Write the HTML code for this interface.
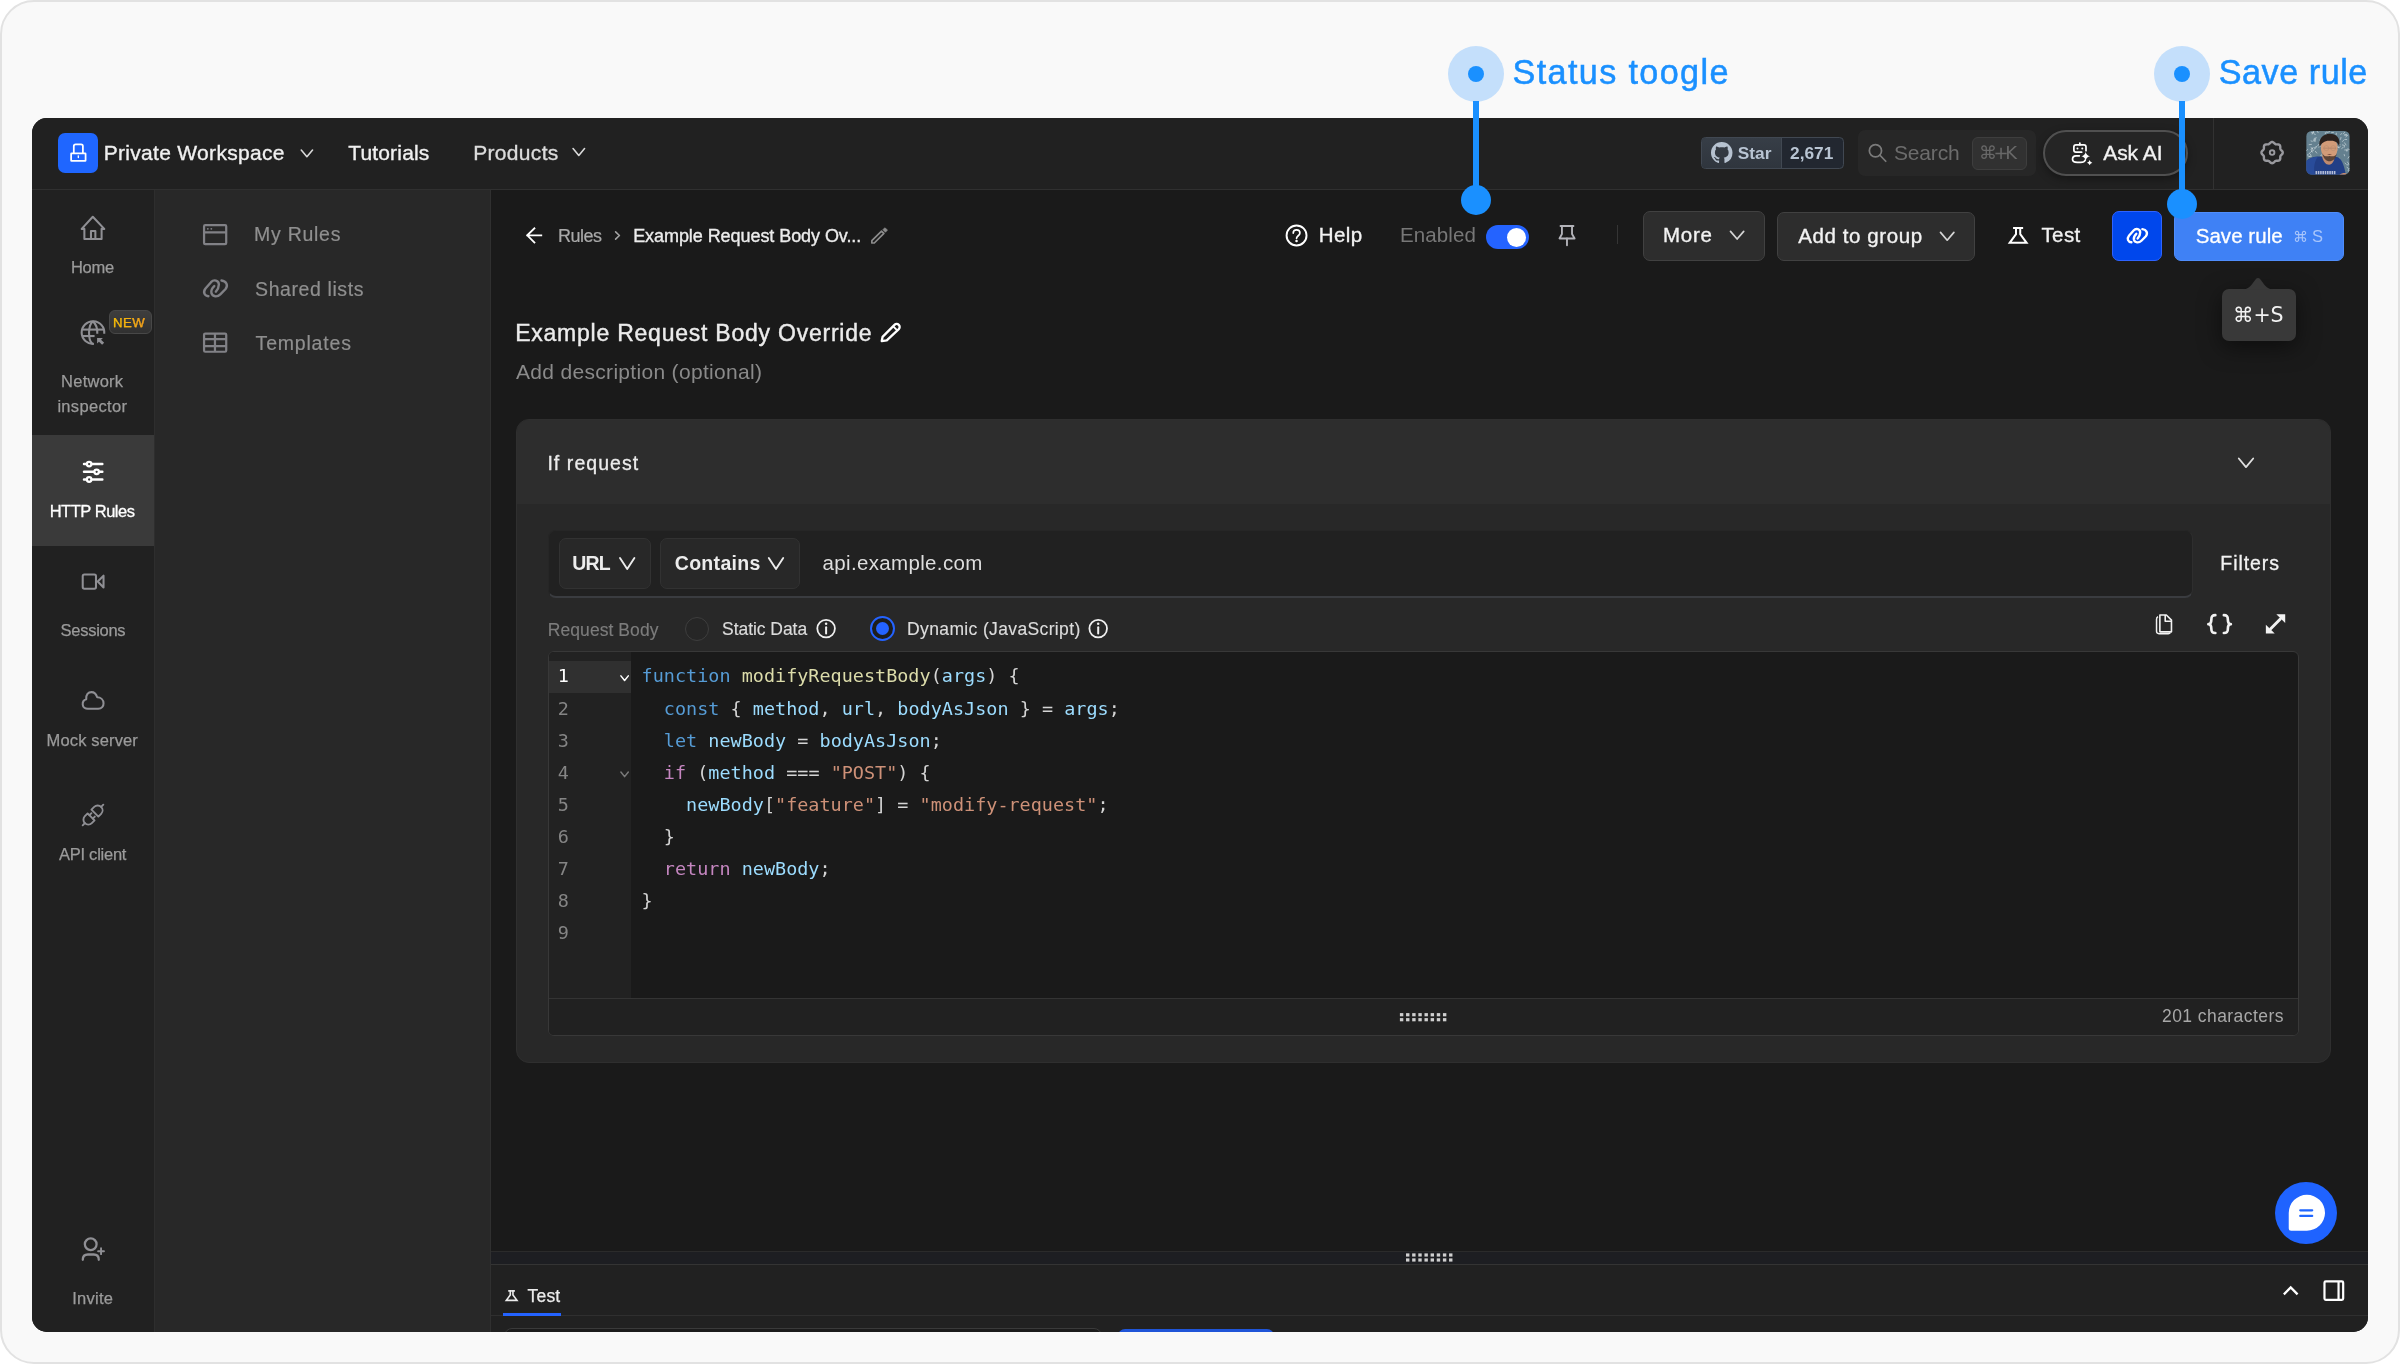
<!DOCTYPE html>
<html lang="en"><head><meta charset="utf-8"><title>Requestly – Example Request Body Override</title>
<style>
*{box-sizing:border-box;margin:0;padding:0}
html,body{width:2400px;height:1364px;overflow:hidden;background:#fff}
body{position:relative;font-family:"Liberation Sans","DejaVu Sans",sans-serif;}
.a{position:absolute}
.t{position:absolute;white-space:nowrap;line-height:1;font-kerning:normal}
#frame{position:absolute;left:0;top:0;width:2400px;height:1364px;border:2px solid #e2e2e2;border-radius:34px;background:#f9f9f9}
#win{position:absolute;left:0;top:0;width:2400px;height:1364px;clip-path:inset(118px 32px 32px 32px round 15px);background:#1a1a1a}
svg{position:absolute;overflow:visible}
.tl{will-change:transform}
.btn{position:absolute;background:#2d2d2d;border:1.5px solid #414141;border-radius:7px}
</style></head>
<body>

<div id="frame"></div>
<div id="win">
  <!-- header -->
  <div class="a" style="left:32px;top:118px;width:2336px;height:72px;background:#212121;border-bottom:1.5px solid #303030"></div>
  <!-- left rail -->
  <div class="a" style="left:32px;top:190px;width:123px;height:1142px;background:#212121;border-right:1.5px solid #2e2e2e"></div>
  <div class="a" style="left:32px;top:434.5px;width:122px;height:111px;background:#3a3a3a"></div>
  <!-- secondary sidebar -->
  <div class="a" style="left:155px;top:190px;width:336px;height:1142px;background:#282828;border-right:1.5px solid #303030"></div>

  <div class="a" style="left:109.2px;top:310px;width:42.6px;height:24.2px;border-radius:6px;background:linear-gradient(180deg,#3e3e3e,#313131);border:1.5px solid #484848"></div>
  <!-- logo -->
  <div class="a" style="left:58px;top:132.5px;width:40px;height:40px;border-radius:7px;background:#1f66ff"></div>
  <!--ICONS-->

  <!-- header right -->
  <div class="a" style="left:1701px;top:137px;width:143px;height:31.5px;border-radius:4.5px;background:#222730;border:1.5px solid #414852;overflow:hidden"><div class="a" style="left:-1.5px;top:-1.5px;width:81px;height:32px;background:linear-gradient(180deg,#373e47,#2f353d);border-right:1.5px solid #414852"></div></div>
  <div class="a" style="left:1858px;top:130px;width:178px;height:45.5px;border-radius:7px;background:#272727"></div>
  <div class="a" style="left:1972px;top:136.5px;width:54.5px;height:33px;border-radius:6px;background:#313131;border:1.5px solid #3e3e3e"></div>
  <div class="a" style="left:2042.5px;top:130px;width:145px;height:46px;border-radius:23px;background:#252525;border:2px solid #505050;box-shadow:0 3px 8px rgba(0,0,0,.35)"></div>
  <div class="a" style="left:2212.5px;top:118px;width:1.5px;height:71px;background:#323232"></div>

  <!-- toolbar -->
  <div class="a" style="left:1485.5px;top:224.5px;width:43.5px;height:24.5px;border-radius:13px;background:#2463ff"></div>
  <div class="a" style="left:1507px;top:227.5px;width:19px;height:19px;border-radius:10px;background:#fff"></div>
  <div class="a" style="left:1616.5px;top:225px;width:1.5px;height:19px;background:#353535"></div>
  <div class="btn" style="left:1642.5px;top:211px;width:122px;height:49.5px"></div>
  <div class="btn" style="left:1777px;top:211.5px;width:197.5px;height:49.5px"></div>
  <div class="a" style="left:2112px;top:211px;width:50px;height:49.5px;border-radius:7px;background:#0047ec;border:1.5px solid #2e63ff"></div>
  <div class="a" style="left:2174px;top:211.5px;width:169.5px;height:49.5px;border-radius:7px;background:#3f81f5;border:1.5px solid #4f8dfb"></div>
  <!-- tooltip -->
  <div class="a" style="left:2221.5px;top:289px;width:74px;height:52px;border-radius:7px;background:#393939;box-shadow:0 6px 22px rgba(0,0,0,.5)"></div>
  <svg style="left:2240px;top:276px" width="36" height="14" viewBox="0 0 36 14"><path d="M3 13.5 C9 13.5 12 8 15.5 3.5 Q18 .6 20.5 3.5 C24 8 27 13.5 33 13.5 Z" fill="#393939"/></svg>

  <!-- card -->
  <div class="a" style="left:515.5px;top:419px;width:1815.5px;height:644px;border-radius:13px;background:#282828;border:1.5px solid #2f2f2f;overflow:hidden"><div class="a" style="left:0;top:0;width:100%;height:84px;background:#2d2d2d"></div></div>
  <!-- source row -->
  <div class="a" style="left:548px;top:529.5px;width:1644.5px;height:68px;border-radius:8px;background:#212121;border:1.5px solid #262626;border-bottom:2.5px solid #3a3c40;border-right-color:#2e2e2e"></div>
  <div class="a" style="left:559px;top:538px;width:91.5px;height:50.5px;border-radius:7px;background:#282828;border:1.5px solid #323232"></div>
  <div class="a" style="left:660px;top:538px;width:140px;height:50.5px;border-radius:7px;background:#282828;border:1.5px solid #323232"></div>
  <!-- radios -->
  <div class="a" style="left:684.5px;top:616.5px;width:24px;height:24px;border-radius:12px;background:#262626;border:1.5px solid #3e3e3e"></div>
  <div class="a" style="left:870px;top:616px;width:25px;height:25px;border-radius:13px;background:#1d1d1d;border:2px solid #2463ff"></div>
  <div class="a" style="left:875.8px;top:621.8px;width:13.4px;height:13.4px;border-radius:7px;background:#2463ff"></div>
  <!-- editor -->
  <div class="a" style="left:548px;top:651px;width:1750.5px;height:385px;border-radius:6px;background:#1a1a1a;border:1.5px solid #383838;overflow:hidden">
    <div class="a" style="left:0;top:0;width:82px;height:346px;background:#222222"></div>
    <div class="a" style="left:0;top:9px;width:82px;height:32px;background:#303030"></div>
    <div class="a" style="left:0;top:346px;width:100%;height:40px;background:#212121;border-top:1.5px solid #343434"></div>
  </div>
  <!-- bottom panel -->
  <div class="a" style="left:491px;top:1250.5px;width:1877px;height:14px;background:#1d1e22;border-top:1.5px solid #2b2b2b;border-bottom:1.5px solid #343434"></div>
  <div class="a" style="left:491px;top:1264.5px;width:1877px;height:68px;background:#212121"></div>
  <div class="a" style="left:491px;top:1314.5px;width:1877px;height:1.5px;background:#2f2f2f"></div>
  <div class="a" style="left:503px;top:1312.5px;width:57.5px;height:3.5px;background:#2463ff"></div>
  <div class="a" style="left:503.5px;top:1328px;width:598px;height:20px;border-radius:8px;border:1.5px solid #3a3a3a;background:#1c1c1c"></div>
  <div class="a" style="left:1118px;top:1329px;width:156px;height:20px;border-radius:7px;background:#1f55d8"></div>
  <!-- chat fab -->
  <div class="a" style="left:2275px;top:1182px;width:62px;height:62px;border-radius:31px;background:#1f63ff"></div>
  <svg style="left:50px;top:125px" width="280" height="55" viewBox="0 0 2400 471" ><g fill="none" stroke="#fff" stroke-width="15" stroke-linejoin="round"><rect x="181" y="243" width="124" height="65" rx="4"/><path d="M204 246 V182 Q204 166 220 166 H266 Q282 166 282 182 V243"/><path d="M243 264 V278" stroke-linecap="round" stroke-width="12"/></g></svg>
<svg style="left:0;top:0" width="2400" height="1364"><path d="M301.25 150.10 L306.90 156.70 L312.55 150.10" fill="none" stroke="#d9d9d9" stroke-width="1.6" stroke-linecap="round" stroke-linejoin="round"/></svg>
<svg style="left:0;top:0" width="2400" height="1364"><path d="M573.05 148.60 L578.80 155.40 L584.55 148.60" fill="none" stroke="#d9d9d9" stroke-width="1.6" stroke-linecap="round" stroke-linejoin="round"/></svg>
<svg style="left:60px;top:205px" width="70" height="50" viewBox="0 0 1910 1364" ><g fill="none" stroke="#8f8f94" stroke-width="56" stroke-linejoin="round" stroke-linecap="round"><path d="M592 652 L895 322 L1208 652 H1135 V928 H665 V652 Z"/><path d="M845 925 V710 H965 V925"/></g></svg>
<svg style="left:60px;top:305px" width="100" height="50" viewBox="0 0 2400 1200" ><g fill="none" stroke="#8f8f94" stroke-width="50"><path d="M1062 690 A272 272 0 1 0 815 932"/><path d="M790 392 C672 480 665 830 775 932"/><path d="M790 392 C870 460 900 580 895 690"/><path d="M545 590 H1040"/><path d="M545 745 H830"/></g><path d="M890 790 H1030 L985 835 L1060 905 L1010 955 L935 880 L890 925 Z" fill="#8f8f94"/></svg>
<svg style="left:60px;top:450px" width="70" height="50" viewBox="0 0 1910 1364" ><g stroke="#fff" stroke-width="68" stroke-linecap="round" fill="none"><path d="M655 385 H1155 M655 595 H1155 M655 805 H1155"/></g><g fill="#3a3a3a" stroke="#fff" stroke-width="62"><circle cx="795" cy="385" r="62"/><circle cx="1000" cy="595" r="62"/><circle cx="795" cy="805" r="62"/></g></svg>
<svg style="left:60px;top:560px" width="70" height="50" viewBox="0 0 1910 1364" ><g fill="none" stroke="#8f8f94" stroke-width="56" stroke-linejoin="round"><rect x="620" y="395" width="362" height="388" rx="45"/><path d="M1030 588 L1188 428 V752 Z"/></g></svg>
<svg style="left:60px;top:680px" width="70" height="50" viewBox="0 0 1910 1364" ><path d="M760 785 H1040 C1140 785 1190 715 1188 635 C1185 540 1110 470 1015 470 C985 380 925 330 860 330 C770 330 705 400 715 525 C650 545 615 600 620 670 C625 740 690 785 760 785 Z" fill="none" stroke="#8f8f94" stroke-width="56" stroke-linejoin="round"/></svg>
<svg style="left:0;top:0" width="2400" height="1364"><g transform="translate(93 815) rotate(-45)" fill="none" stroke="#8f8f94" stroke-width="1.9" stroke-linecap="round" stroke-linejoin="round"><path d="M2.7 -4.9 V4.9 H6.6 A4.9 4.9 0 0 0 6.6 -4.9 Z"/><path d="M11.5 0 H14.6"/><path d="M-2.7 -4.9 V4.9 H-6.6 A4.9 4.9 0 0 1 -6.6 -4.9 Z"/><path d="M-11.5 0 H-14.6"/><path d="M-2.7 -2.4 H0.2 M-2.7 2.4 H0.2"/></g></svg>
<svg style="left:60px;top:1225px" width="70" height="50" viewBox="0 0 1910 1364" ><g fill="none" stroke="#8f8f94" stroke-width="62" stroke-linecap="round"><circle cx="838" cy="525" r="160"/><path d="M622 950 C622 850 680 805 760 805 H920 C1000 805 1058 850 1058 950"/><path d="M1040 715 H1200 M1120 635 V795" stroke-width="52"/></g></svg>
<svg style="left:190px;top:210px" width="60" height="160" viewBox="0 0 512 1364" ><g fill="none" stroke="#818186" stroke-width="19" stroke-linejoin="round"><rect x="120" y="128" width="189" height="163" rx="10"/><path d="M120 190 H309"/><rect x="120" y="1054" width="189" height="155" rx="10"/><path d="M120 1102 H309 M120 1160 H309 M213 1054 V1209"/></g><circle cx="152" cy="160" r="8" fill="#818186"/><circle cx="182" cy="160" r="8" fill="#818186"/></svg>
<svg style="left:0;top:0" width="2400" height="1364"><g transform="translate(176.99 251.82) scale(0.05234)"><path d="M600 848 C525 842 490 770 545 700 L650 580 C705 520 800 545 800 625 C800 685 770 730 742 762 M850 548 C940 558 985 635 928 712 L828 812 C770 870 680 862 658 790 C645 735 672 692 712 655" fill="none" stroke="#818186" stroke-width="45.9" stroke-linecap="round"/></g></svg>
<svg style="left:2105px;top:205px" width="65" height="60" viewBox="0 0 1478 1364" ><path d="M600 848 C525 842 490 770 545 700 L650 580 C705 520 800 545 800 625 C800 685 770 730 742 762 M850 548 C940 558 985 635 928 712 L828 812 C770 870 680 862 658 790 C645 735 672 692 712 655" fill="none" stroke="#fff" stroke-width="54" stroke-linecap="round"/></svg>
<svg style="left:515px;top:215px" width="120" height="40" viewBox="0 0 2400 800" ><path d="M525 407 H245 M388 268 L245 407 L388 548" fill="none" stroke="#fff" stroke-width="37" stroke-linecap="square" stroke-linejoin="miter"/><path d="M2012 338 L2088 410 L2012 482" fill="none" stroke="#a3a3a3" stroke-width="32" stroke-linecap="round" stroke-linejoin="round"/></svg>
<svg style="left:860px;top:215px" width="50" height="40" viewBox="0 0 1705 1364" ><path d="M405 955 V872 L735 548 L815 628 L488 955 Z" fill="none" stroke="#8b8b8b" stroke-width="58" stroke-linejoin="round"/><path d="M778 500 L838 440 Q850 428 862 440 L928 506 Q940 518 928 530 L868 590 Z" fill="#8b8b8b" stroke="#8b8b8b" stroke-width="20" stroke-linejoin="round"/></svg>
<svg style="left:870px;top:312px" width="50" height="40" viewBox="0 0 1705 1364" ><path d="M400 992 L428 850 L835 440 A100 100 0 0 1 982 585 L572 968 Z" fill="none" stroke="#fff" stroke-width="78" stroke-linejoin="round"/><path d="M800 498 L912 610" stroke="#fff" stroke-width="62"/></svg>
<svg style="left:1275px;top:215px" width="60" height="40" viewBox="0 0 2046 1364" ><g fill="none" stroke="#fff" stroke-width="66" stroke-linecap="round"><circle cx="735" cy="697" r="340"/><path d="M622 615 C622 545 675 510 735 510 C800 510 850 555 850 615 C850 700 735 715 735 795" stroke-width="58"/></g><circle cx="735" cy="888" r="44" fill="#fff"/></svg>
<svg style="left:1540px;top:215px" width="60" height="40" viewBox="0 0 2046 1364" ><g fill="none" stroke="#b3b3b9" stroke-width="64" stroke-linecap="round" stroke-linejoin="round"><path d="M700 375 H1140"/><path d="M748 375 V650 L665 800 H1180 L1092 650 V375"/><path d="M920 800 V1030"/></g></svg>
<svg style="left:0;top:0" width="2400" height="1364"><path d="M1730.50 231.40 L1737.10 239.00 L1743.70 231.40" fill="none" stroke="#d4d4d4" stroke-width="1.7" stroke-linecap="round" stroke-linejoin="round"/></svg>
<svg style="left:0;top:0" width="2400" height="1364"><path d="M1940.50 232.40 L1947.20 240.20 L1953.90 232.40" fill="none" stroke="#d4d4d4" stroke-width="1.7" stroke-linecap="round" stroke-linejoin="round"/></svg>
<svg style="left:1995px;top:215px" width="60" height="40" viewBox="0 0 2046 1364" ><g fill="none" stroke="#fff" stroke-width="68" stroke-linejoin="miter" stroke-linecap="square"><path d="M650 440 H925"/><path d="M717 440 V655 L500 950 H1078 L860 655 V440"/></g></svg>
<svg style="left:1710.6px;top:141.9px" width="21.5" height="21.5" viewBox="0 0 16 16" ><path d="M8 0C3.58 0 0 3.58 0 8c0 3.54 2.29 6.53 5.47 7.59.4.07.55-.17.55-.38 0-.19-.01-.82-.01-1.49-2.01.37-2.53-.49-2.69-.94-.09-.23-.48-.94-.82-1.13-.28-.15-.68-.52-.01-.53.63-.01 1.08.58 1.23.82.72 1.21 1.87.87 2.33.66.07-.52.28-.87.51-1.07-1.78-.2-3.64-.89-3.64-3.95 0-.87.31-1.59.82-2.15-.08-.2-.36-1.02.08-2.12 0 0 .67-.21 2.2.82.64-.18 1.32-.27 2-.27.68 0 1.36.09 2 .27 1.53-1.04 2.2-.82 2.2-.82.44 1.1.16 1.92.08 2.12.51.56.82 1.27.82 2.15 0 3.07-1.87 3.75-3.65 3.95.29.25.54.73.54 1.48 0 1.07-.01 1.93-.01 2.2 0 .21.15.46.55.38A8.013 8.013 0 0016 8c0-4.42-3.58-8-8-8z" fill="#b6c2d0"/></svg>
<svg style="left:1855px;top:125px" width="190" height="55" viewBox="0 0 2400 695" ><g fill="none" stroke="#7b7b7b" stroke-width="22" stroke-linecap="round"><circle cx="258" cy="325" r="77"/><path d="M315 382 L388 458"/></g></svg>
<svg style="left:2040px;top:125px" width="160" height="55" viewBox="0 0 2400 825" ><g fill="none" stroke="#fff" stroke-width="26" stroke-linecap="round" stroke-linejoin="round"><path d="M690 385 V330 Q690 298 658 298 H540 Q508 298 508 330 V375 Q508 408 540 408 H625"/><path d="M598 270 V295"/><path d="M590 462 H540 C500 462 488 490 488 515 C488 545 515 562 560 562 H610 C650 562 672 545 680 525"/></g><circle cx="562" cy="352" r="15" fill="#fff"/><circle cx="634" cy="352" r="15" fill="#fff"/><path d="M685 405 Q696 458 750 470 Q696 482 685 535 Q674 482 620 470 Q674 458 685 405 Z" fill="#fff"/><path d="M745 525 Q752 558 785 565 Q752 572 745 605 Q738 572 705 565 Q738 558 745 525 Z" fill="#fff"/></svg>
<svg style="left:0;top:0" width="2400" height="1364"><polygon points="2282.75,152.60 2282.67,152.05 2282.43,151.51 2282.07,151.02 2281.65,150.57 2281.23,150.15 2280.85,149.76 2280.57,149.35 2280.38,148.91 2280.30,148.42 2280.28,147.88 2280.29,147.28 2280.27,146.67 2280.17,146.06 2279.96,145.52 2279.63,145.07 2279.18,144.74 2278.64,144.53 2278.03,144.43 2277.42,144.41 2276.82,144.42 2276.28,144.40 2275.79,144.32 2275.35,144.13 2274.94,143.85 2274.55,143.47 2274.13,143.05 2273.68,142.63 2273.19,142.27 2272.65,142.03 2272.10,141.95 2271.55,142.03 2271.01,142.27 2270.52,142.63 2270.07,143.05 2269.65,143.47 2269.26,143.85 2268.85,144.13 2268.41,144.32 2267.92,144.40 2267.38,144.42 2266.78,144.41 2266.17,144.43 2265.56,144.53 2265.02,144.74 2264.57,145.07 2264.24,145.52 2264.03,146.06 2263.93,146.67 2263.91,147.28 2263.92,147.88 2263.90,148.42 2263.82,148.91 2263.63,149.35 2263.35,149.76 2262.97,150.15 2262.55,150.57 2262.13,151.02 2261.77,151.51 2261.53,152.05 2261.45,152.60 2261.53,153.15 2261.77,153.69 2262.13,154.18 2262.55,154.63 2262.97,155.05 2263.35,155.44 2263.63,155.85 2263.82,156.29 2263.90,156.78 2263.92,157.32 2263.91,157.92 2263.93,158.53 2264.03,159.14 2264.24,159.68 2264.57,160.13 2265.02,160.46 2265.56,160.67 2266.17,160.77 2266.78,160.79 2267.38,160.78 2267.92,160.80 2268.41,160.88 2268.85,161.07 2269.26,161.35 2269.65,161.73 2270.07,162.15 2270.52,162.57 2271.01,162.93 2271.55,163.17 2272.10,163.25 2272.65,163.17 2273.19,162.93 2273.68,162.57 2274.13,162.15 2274.55,161.73 2274.94,161.35 2275.35,161.07 2275.79,160.88 2276.28,160.80 2276.82,160.78 2277.42,160.79 2278.03,160.77 2278.64,160.67 2279.18,160.46 2279.63,160.13 2279.96,159.68 2280.17,159.14 2280.27,158.53 2280.29,157.92 2280.28,157.32 2280.30,156.78 2280.38,156.29 2280.57,155.85 2280.85,155.44 2281.23,155.05 2281.65,154.63 2282.07,154.18 2282.43,153.69 2282.67,153.15" fill="none" stroke="#99999e" stroke-width="2.4" stroke-linejoin="round"/><circle cx="2272.1" cy="152.6" r="2.3" fill="none" stroke="#99999e" stroke-width="1.9"/></svg>
<svg style="left:2250px;top:125px" width="110" height="55" viewBox="0 0 2400 1200" ><defs><clipPath id="avc"><rect x="1226" y="131" width="950" height="954" rx="120"/></clipPath></defs><g clip-path="url(#avc)"><rect x="1226" y="131" width="950" height="954" fill="#64808f"/><path d="M1678 617L1638 626M1692 633L1728 657M1807 817L1841 827M1327 825L1312 847M2164 949L2143 990M1383 139L1381 166M1392 346L1433 350M1648 841L1645 888M1700 692L1705 727M2190 984L2146 1008M1521 327L1538 348M1969 475L1934 493M2115 869L2147 869M2106 543L2067 545M1317 670L1290 692M1342 423L1291 429M1332 348L1358 356M1984 273L1976 313M1392 760L1435 779M1330 491L1357 513M2127 808L2159 854M1453 469L1411 490M1315 980L1342 1001M1949 412L1966 434M1303 625L1336 657M1603 527L1562 532M1759 877L1785 893M2073 832L2096 854M1903 932L1950 966M2056 645L2063 673M1253 951L1289 985M1481 832L1470 865M1383 756L1415 763M1764 857L1752 889M2076 315L2110 316M1636 182L1668 202M1758 228L1782 279M2165 686L2139 724M1338 169L1395 172M1867 966L1914 970M1670 743L1702 793M1325 589L1286 630M1947 728L1901 762M1590 721L1538 738M1646 810L1605 829M1825 446L1813 491M1338 689L1282 690M1931 457L1901 491M1622 854L1672 868M1262 641L1264 674M1898 541L1878 594M1460 130L1488 169M1447 279L1401 293M1636 886L1661 928M1444 494L1397 527M2063 453L2053 488M1386 554L1338 580M1890 945L1910 969M1641 364L1672 389M1805 542L1835 587M2141 526L2166 532M2065 158L2037 194M1509 820L1539 822M1675 153L1646 170M1375 162L1359 199M1848 687L1800 720M1874 296L1876 327M1255 534L1235 558M1502 420L1477 455M1801 765L1818 815M2107 210L2058 220M1367 504L1346 556M1612 619L1563 639M2125 524L2111 553M1921 821L1899 866M1464 912L1405 916M1722 796L1752 844M2016 435L2055 445M1749 788L1750 814M2004 186L1979 204M1535 811L1562 824M1739 750L1696 774M2133 561L2105 566M1427 573L1457 613M1852 579L1813 600M1551 455L1501 481M1451 870L1408 874M1773 292L1768 334M1822 162L1779 166M1614 808L1605 850M1883 177L1879 216M2116 919L2143 950M1377 498L1330 528M1661 400L1700 426M2110 243L2090 260M1427 320L1406 351M1543 665L1591 681M1339 568L1361 590M1723 497L1738 534M1711 263L1749 291M1853 585L1811 606M2054 321L2018 359M2063 388L2095 436M1453 993L1425 1004M1449 755L1469 775M2025 494L2001 512M1596 728L1628 730M1887 922L1859 925M1708 768L1708 817M1399 196L1424 205M1754 568L1748 597M1434 301L1381 330M2073 216L2130 228M1656 780L1678 815M1721 498L1713 522M1873 855L1908 877M1914 480L1939 497M1739 145L1689 162M1902 862L1886 898M1822 572L1769 575" stroke="#e6edf0" stroke-width="15" stroke-linecap="round" opacity=".8"/><path d="M1226 790 C1300 700 1470 675 1560 690 L1900 700 C1990 730 2050 850 2090 1085 H1226 Z" fill="#223f86"/><path d="M1226 790 C1280 730 1400 690 1480 690 C1400 800 1380 950 1420 1085 H1226 Z" fill="#2f55a8" opacity=".6"/><path d="M1570 680 C1600 800 1650 865 1725 865 C1800 865 1830 790 1850 700 L1800 640 H1610 Z" fill="#c08a6e"/><path d="M1548 500 C1548 360 1630 300 1735 300 C1845 300 1915 370 1910 500 C1905 650 1830 770 1735 770 C1640 770 1550 650 1548 500 Z" fill="#d29b78"/><path d="M1575 610 C1600 740 1670 790 1735 790 C1800 790 1870 740 1895 620 C1860 690 1800 690 1735 675 C1670 690 1610 690 1575 610 Z" fill="#4a362d" opacity=".85"/><path d="M1680 640 Q1735 620 1790 640 Q1735 665 1680 640 Z" fill="#7a4f40"/><path d="M1522 480 C1480 300 1600 192 1740 192 C1885 192 1985 290 1945 470 C1925 385 1860 335 1745 345 C1640 335 1560 385 1522 480 Z" fill="#2a211e"/><path d="M1600 505 H1880" stroke="#7d5e4e" stroke-width="12" opacity=".55"/><circle cx="1665" cy="505" r="55" fill="none" stroke="#9a7a68" stroke-width="9" opacity=".6"/><circle cx="1815" cy="505" r="55" fill="none" stroke="#9a7a68" stroke-width="9" opacity=".6"/><path d="M1430 1040 H1880" stroke="#cfd5e6" stroke-width="70" stroke-dasharray="34 16" opacity=".85"/><path d="M1950 1085 C1990 1050 2060 1040 2100 1050 V1085 Z" fill="#c28a6c"/></g></svg>
<svg style="left:0;top:0" width="2400" height="1364"><path d="M2238.80 458.50 L2246.00 467.10 L2253.20 458.50" fill="none" stroke="#e0e0e0" stroke-width="1.8" stroke-linecap="round" stroke-linejoin="round"/></svg>
<svg style="left:0;top:0" width="2400" height="1364"><path d="M620.00 558.00 L627.20 569.00 L634.40 558.00" fill="none" stroke="#ececec" stroke-width="1.9" stroke-linecap="round" stroke-linejoin="round"/></svg>
<svg style="left:0;top:0" width="2400" height="1364"><path d="M768.80 558.00 L776.00 569.00 L783.20 558.00" fill="none" stroke="#ececec" stroke-width="1.9" stroke-linecap="round" stroke-linejoin="round"/></svg>
<svg style="left:0;top:0" width="2400" height="1364"><circle cx="826.1" cy="628.6" r="8.8" fill="none" stroke="#f0f0f0" stroke-width="1.8"/><path d="M826.1 627.2 V633.4" stroke="#f0f0f0" stroke-width="2" stroke-linecap="round"/><circle cx="826.1" cy="623.7" r="1.25" fill="#f0f0f0"/></svg>
<svg style="left:0;top:0" width="2400" height="1364"><circle cx="1098.2" cy="628.6" r="8.8" fill="none" stroke="#f0f0f0" stroke-width="1.8"/><path d="M1098.2 627.2 V633.4" stroke="#f0f0f0" stroke-width="2" stroke-linecap="round"/><circle cx="1098.2" cy="623.7" r="1.25" fill="#f0f0f0"/></svg>
<svg style="left:2140px;top:600px" width="160" height="48" viewBox="0 0 2400 720" ><g fill="none" stroke="#f2f2f2" stroke-width="24" stroke-linejoin="round"><path d="M298 225 H395 L472 302 V478 H298 Z"/><path d="M378 225 V318 H472" /><path d="M270 250 Q248 262 248 290 V470 Q248 505 285 505 H425 Q445 505 455 488" stroke-width="22"/></g><g fill="none" stroke="#f2f2f2" stroke-width="40" stroke-linecap="round" stroke-linejoin="round"><path d="M1130 228 C1075 228 1070 255 1070 295 C1070 340 1060 360 1025 362 C1060 364 1070 385 1070 430 C1070 470 1075 495 1130 495"/><path d="M1258 228 C1313 228 1318 255 1318 295 C1318 340 1328 360 1363 362 C1328 364 1318 385 1318 430 C1318 470 1313 495 1258 495"/><path d="M1960 430 L2105 285" stroke-width="44"/></g><path d="M2178 212 V345 L2045 212 Z M1888 503 V370 L2021 503 Z" fill="#f2f2f2"/></svg>
<svg style="left:0;top:0" width="2400" height="1364"><path d="M620.90 675.90 L624.60 680.50 L628.30 675.90" fill="none" stroke="#ffffff" stroke-width="1.5" stroke-linecap="round" stroke-linejoin="round"/></svg>
<svg style="left:0;top:0" width="2400" height="1364"><path d="M620.90 772.00 L624.60 776.60 L628.30 772.00" fill="none" stroke="#7a7a7a" stroke-width="1.5" stroke-linecap="round" stroke-linejoin="round"/></svg>
<svg style="left:0;top:0" width="2400" height="1364"><rect x="1399.90" y="1013.10" width="3.4" height="3.2" fill="#cfcfcf"/><rect x="1399.90" y="1018.10" width="3.4" height="3.2" fill="#cfcfcf"/><rect x="1406.05" y="1013.10" width="3.4" height="3.2" fill="#cfcfcf"/><rect x="1406.05" y="1018.10" width="3.4" height="3.2" fill="#cfcfcf"/><rect x="1412.20" y="1013.10" width="3.4" height="3.2" fill="#cfcfcf"/><rect x="1412.20" y="1018.10" width="3.4" height="3.2" fill="#cfcfcf"/><rect x="1418.35" y="1013.10" width="3.4" height="3.2" fill="#cfcfcf"/><rect x="1418.35" y="1018.10" width="3.4" height="3.2" fill="#cfcfcf"/><rect x="1424.50" y="1013.10" width="3.4" height="3.2" fill="#cfcfcf"/><rect x="1424.50" y="1018.10" width="3.4" height="3.2" fill="#cfcfcf"/><rect x="1430.65" y="1013.10" width="3.4" height="3.2" fill="#cfcfcf"/><rect x="1430.65" y="1018.10" width="3.4" height="3.2" fill="#cfcfcf"/><rect x="1436.80" y="1013.10" width="3.4" height="3.2" fill="#cfcfcf"/><rect x="1436.80" y="1018.10" width="3.4" height="3.2" fill="#cfcfcf"/><rect x="1442.95" y="1013.10" width="3.4" height="3.2" fill="#cfcfcf"/><rect x="1442.95" y="1018.10" width="3.4" height="3.2" fill="#cfcfcf"/></svg>
<svg style="left:0;top:0" width="2400" height="1364"><rect x="1406.00" y="1253.40" width="3.4" height="3.2" fill="#cfcfcf"/><rect x="1406.00" y="1258.40" width="3.4" height="3.2" fill="#cfcfcf"/><rect x="1412.15" y="1253.40" width="3.4" height="3.2" fill="#cfcfcf"/><rect x="1412.15" y="1258.40" width="3.4" height="3.2" fill="#cfcfcf"/><rect x="1418.30" y="1253.40" width="3.4" height="3.2" fill="#cfcfcf"/><rect x="1418.30" y="1258.40" width="3.4" height="3.2" fill="#cfcfcf"/><rect x="1424.45" y="1253.40" width="3.4" height="3.2" fill="#cfcfcf"/><rect x="1424.45" y="1258.40" width="3.4" height="3.2" fill="#cfcfcf"/><rect x="1430.60" y="1253.40" width="3.4" height="3.2" fill="#cfcfcf"/><rect x="1430.60" y="1258.40" width="3.4" height="3.2" fill="#cfcfcf"/><rect x="1436.75" y="1253.40" width="3.4" height="3.2" fill="#cfcfcf"/><rect x="1436.75" y="1258.40" width="3.4" height="3.2" fill="#cfcfcf"/><rect x="1442.90" y="1253.40" width="3.4" height="3.2" fill="#cfcfcf"/><rect x="1442.90" y="1258.40" width="3.4" height="3.2" fill="#cfcfcf"/><rect x="1449.05" y="1253.40" width="3.4" height="3.2" fill="#cfcfcf"/><rect x="1449.05" y="1258.40" width="3.4" height="3.2" fill="#cfcfcf"/></svg>
<svg style="left:2220px;top:1170px" width="140" height="150" viewBox="0 0 1273 1364" ><path d="M625 390 A165 165 0 0 1 955 390 A165 165 0 0 1 790 552 H648 Q625 552 625 529 Z" fill="#fff"/><path d="M730 367 H838 M730 418 H838" stroke="#1f66ff" stroke-width="21" stroke-linecap="round"/><path d="M588 1123 L643 1068 L698 1123" fill="none" stroke="#fff" stroke-width="21" stroke-linecap="square"/><rect x="950" y="1013" width="170" height="168" rx="12" fill="none" stroke="#fff" stroke-width="20"/><path d="M1078 1013 V1181" stroke="#fff" stroke-width="20"/></svg>
<svg style="left:0;top:0" width="2400" height="1364"><g transform="translate(497.00 1282.74) scale(0.01855)" fill="none" stroke="#ececec" stroke-width="86.3" stroke-linejoin="miter" stroke-linecap="square"><path d="M650 440 H925"/><path d="M717 440 V655 L500 950 H1078 L860 655 V440"/></g></svg>
  <div class="a tl" style="left:0;top:0;width:2400px;height:1364px">
  <span class="t" style='left:103.67px;top:142.00px;font-size:21px;color:#f0f0f0;letter-spacing:0.312px;-webkit-text-stroke:0.35px #f0f0f0;'>Private Workspace</span>
<span class="t" style='left:348.18px;top:142.00px;font-size:21px;color:#f0f0f0;letter-spacing:0.176px;-webkit-text-stroke:0.35px #f0f0f0;'>Tutorials</span>
<span class="t" style='left:473.18px;top:142.00px;font-size:21px;color:#dcdcdc;letter-spacing:0.325px;-webkit-text-stroke:0.35px #dcdcdc;'>Products</span>
<span class="t" style='left:1737.70px;top:145.00px;font-size:17.3px;color:#b9c5d3;font-weight:700;letter-spacing:0.036px;'>Star</span>
<span class="t" style='left:1790.00px;top:145.00px;font-size:17.3px;color:#b9c5d3;font-weight:700;letter-spacing:0.016px;'>2,671</span>
<span class="t" style='left:1894.00px;top:142.00px;font-size:21px;color:#6c6c6c;letter-spacing:-0.172px;'>Search</span>
<span class="t" style='left:1979.00px;top:144.00px;font-size:18px;color:#686868;font-family:"DejaVu Sans", "Liberation Sans", sans-serif;letter-spacing:-3.391px;'>&#8984;+K</span>
<span class="t" style='left:2103.18px;top:142.00px;font-size:21px;color:#f2f2f2;letter-spacing:-0.040px;-webkit-text-stroke:0.35px #f2f2f2;'>Ask AI</span>
<span class="t" style='left:70.88px;top:259.00px;font-size:16.5px;color:#9b9b9b;letter-spacing:-0.196px;-webkit-text-stroke:0.25px #9b9b9b;'>Home</span>
<span class="t" style='left:61.12px;top:373.00px;font-size:16.5px;color:#9b9b9b;letter-spacing:0.248px;-webkit-text-stroke:0.25px #9b9b9b;'>Network</span>
<span class="t" style='left:57.38px;top:398.00px;font-size:16.5px;color:#9b9b9b;letter-spacing:0.318px;-webkit-text-stroke:0.25px #9b9b9b;'>inspector</span>
<span class="t" style='left:49.65px;top:503.00px;font-size:16.5px;color:#ffffff;letter-spacing:-0.461px;-webkit-text-stroke:0.3px #ffffff;'>HTTP Rules</span>
<span class="t" style='left:60.62px;top:622.00px;font-size:16.5px;color:#9b9b9b;letter-spacing:-0.279px;-webkit-text-stroke:0.25px #9b9b9b;'>Sessions</span>
<span class="t" style='left:46.62px;top:732.00px;font-size:16.5px;color:#9b9b9b;letter-spacing:0.140px;-webkit-text-stroke:0.25px #9b9b9b;'>Mock server</span>
<span class="t" style='left:58.88px;top:846.00px;font-size:16.5px;color:#9b9b9b;letter-spacing:-0.235px;-webkit-text-stroke:0.25px #9b9b9b;'>API client</span>
<span class="t" style='left:72.22px;top:1290.00px;font-size:16.5px;color:#9b9b9b;letter-spacing:0.258px;-webkit-text-stroke:0.25px #9b9b9b;'>Invite</span>
<span class="t" style='left:113.03px;top:316.00px;font-size:13.2px;color:#f6b010;letter-spacing:0.465px;-webkit-text-stroke:0.25px #f6b010;background:linear-gradient(90deg,#f7c600,#f59a23);-webkit-background-clip:text;background-clip:text;-webkit-text-fill-color:transparent;'>NEW</span>
<span class="t" style='left:254.10px;top:225.00px;font-size:19.5px;color:#8f8f8f;letter-spacing:0.719px;-webkit-text-stroke:0.2px #8f8f8f;'>My Rules</span>
<span class="t" style='left:255.10px;top:280.00px;font-size:19.5px;color:#8f8f8f;letter-spacing:0.584px;-webkit-text-stroke:0.2px #8f8f8f;'>Shared lists</span>
<span class="t" style='left:255.60px;top:334.00px;font-size:19.5px;color:#8f8f8f;letter-spacing:0.803px;-webkit-text-stroke:0.2px #8f8f8f;'>Templates</span>
<span class="t" style='left:558.10px;top:227.00px;font-size:18px;color:#a9a9a9;letter-spacing:-0.555px;-webkit-text-stroke:0.2px #a9a9a9;'>Rules</span>
<span class="t" style='left:633.17px;top:227.00px;font-size:18px;color:#ececec;letter-spacing:-0.065px;-webkit-text-stroke:0.35px #ececec;'>Example Request Body Ov...</span>
<span class="t" style='left:1318.67px;top:225.00px;font-size:20.5px;color:#f2f2f2;letter-spacing:0.463px;-webkit-text-stroke:0.35px #f2f2f2;'>Help</span>
<span class="t" style='left:1400.00px;top:225.00px;font-size:20.5px;color:#777777;letter-spacing:0.111px;'>Enabled</span>
<span class="t" style='left:1662.92px;top:225.00px;font-size:20.5px;color:#f2f2f2;letter-spacing:0.782px;-webkit-text-stroke:0.35px #f2f2f2;'>More</span>
<span class="t" style='left:1798.17px;top:226.00px;font-size:20.5px;color:#f2f2f2;letter-spacing:0.605px;-webkit-text-stroke:0.35px #f2f2f2;'>Add to group</span>
<span class="t" style='left:2041.42px;top:225.00px;font-size:20.5px;color:#f2f2f2;letter-spacing:0.416px;-webkit-text-stroke:0.35px #f2f2f2;'>Test</span>
<span class="t" style='left:2195.65px;top:226.00px;font-size:20.5px;color:#ffffff;letter-spacing:0.062px;-webkit-text-stroke:0.3px #ffffff;'>Save rule</span>
<span class="t" style='left:2293.00px;top:230.00px;font-size:15px;color:#a8c5fb;font-family:"DejaVu Sans", "Liberation Sans", sans-serif;'>&#8984;</span>
<span class="t" style='left:2312.00px;top:228.00px;font-size:16.5px;color:#a8c5fb;letter-spacing:-0.500px;'>S</span>
<span class="t" style='left:2233.00px;top:305.00px;font-size:20.5px;color:#f2f2f2;font-family:"DejaVu Sans", "Liberation Sans", sans-serif;letter-spacing:-0.088px;'>&#8984;+S</span>
<span class="t" style='left:515.20px;top:322.00px;font-size:23px;color:#ececec;letter-spacing:0.766px;-webkit-text-stroke:0.4px #ececec;'>Example Request Body Override</span>
<span class="t" style='left:516.00px;top:361.00px;font-size:21px;color:#8a8a8a;letter-spacing:0.314px;'>Add description (optional)</span>
<span class="t" style='left:547.40px;top:454.00px;font-size:19.5px;color:#ececec;letter-spacing:1.064px;-webkit-text-stroke:0.3px #ececec;'>If request</span>
<span class="t" style='left:572.25px;top:554.00px;font-size:19.5px;color:#ececec;font-weight:700;letter-spacing:-0.832px;'>URL</span>
<span class="t" style='left:674.75px;top:554.00px;font-size:19.5px;color:#ececec;font-weight:700;letter-spacing:0.311px;'>Contains</span>
<span class="t" style='left:822.50px;top:553.00px;font-size:20.5px;color:#dedede;letter-spacing:0.348px;'>api.example.com</span>
<span class="t" style='left:2220.35px;top:554.00px;font-size:19.5px;color:#f2f2f2;letter-spacing:0.911px;-webkit-text-stroke:0.3px #f2f2f2;'>Filters</span>
<span class="t" style='left:547.83px;top:622.00px;font-size:17.5px;color:#7c7c7c;letter-spacing:0.061px;-webkit-text-stroke:0.15px #7c7c7c;'>Request Body</span>
<span class="t" style='left:722.08px;top:621.00px;font-size:17.5px;color:#dcdcdc;letter-spacing:-0.051px;-webkit-text-stroke:0.15px #dcdcdc;'>Static Data</span>
<span class="t" style='left:907.08px;top:621.00px;font-size:17.5px;color:#dcdcdc;letter-spacing:0.363px;-webkit-text-stroke:0.15px #dcdcdc;'>Dynamic (JavaScript)</span>
<span class="t" style='left:2162.00px;top:1008.00px;font-size:17.5px;color:#a8a8a8;letter-spacing:0.438px;'>201 characters</span>
<span class="t" style='left:527.62px;top:1288.00px;font-size:17.5px;color:#ececec;letter-spacing:0.172px;-webkit-text-stroke:0.25px #ececec;'>Test</span>
<span class="t" style='left:641.60px;top:667.00px;font-size:18.45px;color:#569cd6;font-family:"DejaVu Sans Mono", "Liberation Mono", monospace;letter-spacing:0.013px;'>function</span>
<span class="t" style='left:741.68px;top:667.00px;font-size:18.45px;color:#dcdcaa;font-family:"DejaVu Sans Mono", "Liberation Mono", monospace;letter-spacing:0.013px;'>modifyRequestBody</span>
<span class="t" style='left:930.72px;top:667.00px;font-size:18.45px;color:#d4d4d4;font-family:"DejaVu Sans Mono", "Liberation Mono", monospace;letter-spacing:0.013px;'>(</span>
<span class="t" style='left:941.84px;top:667.00px;font-size:18.45px;color:#9cdcfe;font-family:"DejaVu Sans Mono", "Liberation Mono", monospace;letter-spacing:0.013px;'>args</span>
<span class="t" style='left:986.32px;top:667.00px;font-size:18.45px;color:#d4d4d4;font-family:"DejaVu Sans Mono", "Liberation Mono", monospace;letter-spacing:0.013px;'>) {</span>
<span class="t" style='left:557.80px;top:667.00px;font-size:18.45px;color:#ffffff;font-family:"DejaVu Sans Mono", "Liberation Mono", monospace;'>1</span>
<span class="t" style='left:663.84px;top:700.00px;font-size:18.45px;color:#569cd6;font-family:"DejaVu Sans Mono", "Liberation Mono", monospace;letter-spacing:0.013px;'>const</span>
<span class="t" style='left:730.56px;top:700.00px;font-size:18.45px;color:#d4d4d4;font-family:"DejaVu Sans Mono", "Liberation Mono", monospace;letter-spacing:0.013px;'>{</span>
<span class="t" style='left:752.80px;top:700.00px;font-size:18.45px;color:#9cdcfe;font-family:"DejaVu Sans Mono", "Liberation Mono", monospace;letter-spacing:0.013px;'>method</span>
<span class="t" style='left:819.52px;top:700.00px;font-size:18.45px;color:#d4d4d4;font-family:"DejaVu Sans Mono", "Liberation Mono", monospace;letter-spacing:0.013px;'>,</span>
<span class="t" style='left:841.76px;top:700.00px;font-size:18.45px;color:#9cdcfe;font-family:"DejaVu Sans Mono", "Liberation Mono", monospace;letter-spacing:0.013px;'>url</span>
<span class="t" style='left:875.12px;top:700.00px;font-size:18.45px;color:#d4d4d4;font-family:"DejaVu Sans Mono", "Liberation Mono", monospace;letter-spacing:0.013px;'>,</span>
<span class="t" style='left:897.36px;top:700.00px;font-size:18.45px;color:#9cdcfe;font-family:"DejaVu Sans Mono", "Liberation Mono", monospace;letter-spacing:0.013px;'>bodyAsJson</span>
<span class="t" style='left:1019.68px;top:700.00px;font-size:18.45px;color:#d4d4d4;font-family:"DejaVu Sans Mono", "Liberation Mono", monospace;letter-spacing:0.013px;'>} =</span>
<span class="t" style='left:1064.16px;top:700.00px;font-size:18.45px;color:#9cdcfe;font-family:"DejaVu Sans Mono", "Liberation Mono", monospace;letter-spacing:0.013px;'>args</span>
<span class="t" style='left:1108.64px;top:700.00px;font-size:18.45px;color:#d4d4d4;font-family:"DejaVu Sans Mono", "Liberation Mono", monospace;letter-spacing:0.013px;'>;</span>
<span class="t" style='left:557.80px;top:700.00px;font-size:18.45px;color:#858585;font-family:"DejaVu Sans Mono", "Liberation Mono", monospace;'>2</span>
<span class="t" style='left:663.84px;top:732.00px;font-size:18.45px;color:#569cd6;font-family:"DejaVu Sans Mono", "Liberation Mono", monospace;letter-spacing:0.013px;'>let</span>
<span class="t" style='left:708.32px;top:732.00px;font-size:18.45px;color:#9cdcfe;font-family:"DejaVu Sans Mono", "Liberation Mono", monospace;letter-spacing:0.013px;'>newBody</span>
<span class="t" style='left:797.28px;top:732.00px;font-size:18.45px;color:#d4d4d4;font-family:"DejaVu Sans Mono", "Liberation Mono", monospace;letter-spacing:0.013px;'>=</span>
<span class="t" style='left:819.52px;top:732.00px;font-size:18.45px;color:#9cdcfe;font-family:"DejaVu Sans Mono", "Liberation Mono", monospace;letter-spacing:0.013px;'>bodyAsJson</span>
<span class="t" style='left:930.72px;top:732.00px;font-size:18.45px;color:#d4d4d4;font-family:"DejaVu Sans Mono", "Liberation Mono", monospace;letter-spacing:0.013px;'>;</span>
<span class="t" style='left:557.80px;top:732.00px;font-size:18.45px;color:#858585;font-family:"DejaVu Sans Mono", "Liberation Mono", monospace;'>3</span>
<span class="t" style='left:663.84px;top:764.00px;font-size:18.45px;color:#c586c0;font-family:"DejaVu Sans Mono", "Liberation Mono", monospace;letter-spacing:0.013px;'>if</span>
<span class="t" style='left:697.20px;top:764.00px;font-size:18.45px;color:#d4d4d4;font-family:"DejaVu Sans Mono", "Liberation Mono", monospace;letter-spacing:0.013px;'>(</span>
<span class="t" style='left:708.32px;top:764.00px;font-size:18.45px;color:#9cdcfe;font-family:"DejaVu Sans Mono", "Liberation Mono", monospace;letter-spacing:0.013px;'>method</span>
<span class="t" style='left:786.16px;top:764.00px;font-size:18.45px;color:#d4d4d4;font-family:"DejaVu Sans Mono", "Liberation Mono", monospace;letter-spacing:0.013px;'>===</span>
<span class="t" style='left:830.64px;top:764.00px;font-size:18.45px;color:#ce9178;font-family:"DejaVu Sans Mono", "Liberation Mono", monospace;letter-spacing:0.013px;'>&quot;POST&quot;</span>
<span class="t" style='left:897.36px;top:764.00px;font-size:18.45px;color:#d4d4d4;font-family:"DejaVu Sans Mono", "Liberation Mono", monospace;letter-spacing:0.013px;'>) {</span>
<span class="t" style='left:557.80px;top:764.00px;font-size:18.45px;color:#858585;font-family:"DejaVu Sans Mono", "Liberation Mono", monospace;'>4</span>
<span class="t" style='left:686.08px;top:796.00px;font-size:18.45px;color:#9cdcfe;font-family:"DejaVu Sans Mono", "Liberation Mono", monospace;letter-spacing:0.013px;'>newBody</span>
<span class="t" style='left:763.92px;top:796.00px;font-size:18.45px;color:#d4d4d4;font-family:"DejaVu Sans Mono", "Liberation Mono", monospace;letter-spacing:0.013px;'>[</span>
<span class="t" style='left:775.04px;top:796.00px;font-size:18.45px;color:#ce9178;font-family:"DejaVu Sans Mono", "Liberation Mono", monospace;letter-spacing:0.013px;'>&quot;feature&quot;</span>
<span class="t" style='left:875.12px;top:796.00px;font-size:18.45px;color:#d4d4d4;font-family:"DejaVu Sans Mono", "Liberation Mono", monospace;letter-spacing:0.013px;'>] =</span>
<span class="t" style='left:919.60px;top:796.00px;font-size:18.45px;color:#ce9178;font-family:"DejaVu Sans Mono", "Liberation Mono", monospace;letter-spacing:0.013px;'>&quot;modify-request&quot;</span>
<span class="t" style='left:1097.52px;top:796.00px;font-size:18.45px;color:#d4d4d4;font-family:"DejaVu Sans Mono", "Liberation Mono", monospace;letter-spacing:0.013px;'>;</span>
<span class="t" style='left:557.80px;top:796.00px;font-size:18.45px;color:#858585;font-family:"DejaVu Sans Mono", "Liberation Mono", monospace;'>5</span>
<span class="t" style='left:663.84px;top:828.00px;font-size:18.45px;color:#d4d4d4;font-family:"DejaVu Sans Mono", "Liberation Mono", monospace;letter-spacing:0.013px;'>}</span>
<span class="t" style='left:557.80px;top:828.00px;font-size:18.45px;color:#858585;font-family:"DejaVu Sans Mono", "Liberation Mono", monospace;'>6</span>
<span class="t" style='left:663.84px;top:860.00px;font-size:18.45px;color:#c586c0;font-family:"DejaVu Sans Mono", "Liberation Mono", monospace;letter-spacing:0.013px;'>return</span>
<span class="t" style='left:741.68px;top:860.00px;font-size:18.45px;color:#9cdcfe;font-family:"DejaVu Sans Mono", "Liberation Mono", monospace;letter-spacing:0.013px;'>newBody</span>
<span class="t" style='left:819.52px;top:860.00px;font-size:18.45px;color:#d4d4d4;font-family:"DejaVu Sans Mono", "Liberation Mono", monospace;letter-spacing:0.013px;'>;</span>
<span class="t" style='left:557.80px;top:860.00px;font-size:18.45px;color:#858585;font-family:"DejaVu Sans Mono", "Liberation Mono", monospace;'>7</span>
<span class="t" style='left:641.60px;top:892.00px;font-size:18.45px;color:#d4d4d4;font-family:"DejaVu Sans Mono", "Liberation Mono", monospace;letter-spacing:0.013px;'>}</span>
<span class="t" style='left:557.80px;top:892.00px;font-size:18.45px;color:#858585;font-family:"DejaVu Sans Mono", "Liberation Mono", monospace;'>8</span>
<span class="t" style='left:557.80px;top:924.00px;font-size:18.45px;color:#858585;font-family:"DejaVu Sans Mono", "Liberation Mono", monospace;'>9</span>
  </div>
</div>

<!-- annotations -->
<div class="a" style="left:1448px;top:46px;width:56px;height:56px;border-radius:28px;background:#c4dffb"></div>
<div class="a" style="left:1467.8px;top:65.8px;width:16.4px;height:16.4px;border-radius:9px;background:#1a90ff"></div>
<div class="a" style="left:1473px;top:101px;width:6px;height:90px;background:#1a90ff"></div>
<div class="a" style="left:1461px;top:185px;width:30px;height:30px;border-radius:15px;background:#1a90ff"></div>
<div class="a" style="left:2154px;top:46px;width:56px;height:56px;border-radius:28px;background:#c4dffb"></div>
<div class="a" style="left:2173.8px;top:65.8px;width:16.4px;height:16.4px;border-radius:9px;background:#1a90ff"></div>
<div class="a" style="left:2179px;top:101px;width:6px;height:95px;background:#1a90ff"></div>
<div class="a" style="left:2167px;top:188.5px;width:30px;height:30px;border-radius:15px;background:#1a90ff"></div>
<div class="a tl" style="left:0;top:0;width:2400px;height:1364px">
<span class="t ann" style='left:1512.55px;top:55.00px;font-size:34.2px;color:#1a90ff;letter-spacing:1.362px;-webkit-text-stroke:0.5px #1a90ff;'>Status toogle</span>
<span class="t ann" style='left:2218.65px;top:55.00px;font-size:34.2px;color:#1a90ff;letter-spacing:0.536px;-webkit-text-stroke:0.5px #1a90ff;'>Save rule</span>
</div>

</body></html>
